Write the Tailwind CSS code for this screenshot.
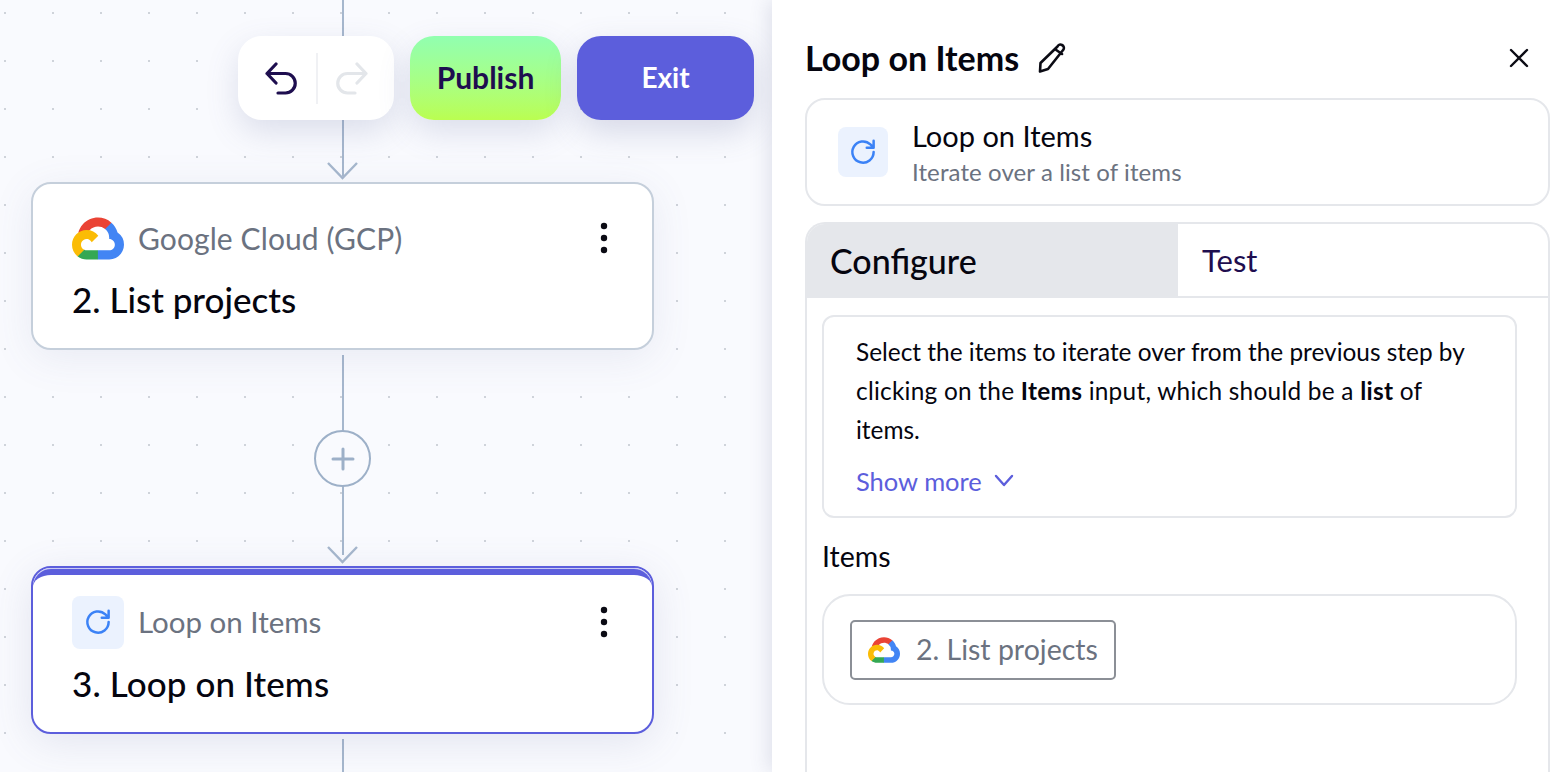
<!DOCTYPE html><html lang="en">
<head>
  <meta charset="UTF-8">
  <meta name="viewport" content="width=device-width, initial-scale=1.0">
  <title>Loop on Items</title>
  <script src="https://cdn.jsdelivr.net/npm/@tailwindcss/browser@4"></script>
</head>
<body class="bg-white font-['Lato',sans-serif] overflow-hidden">
  <div class="flex h-[772px] w-[1563px] overflow-hidden">

    <!-- Canvas -->
    <div class="relative w-[772px] h-full shrink-0 bg-[#f9fafe] bg-[radial-gradient(circle,#cfd3da_1px,transparent_1.4px)] bg-[size:48px_48px] bg-[position:-19px_-11px]">
      <!-- connectors -->
      <div class="absolute left-[342px] top-0 w-[2px] h-[176px] bg-[#a6b7cd]"></div>
      <svg class="absolute left-[326px] top-[160px]" width="33" height="20" viewBox="0 0 33 20" fill="none" stroke="#a6b7cd" stroke-width="2.4"><path d="M2 3 L16.5 18 L31 3"/></svg>
      <div class="absolute left-[342px] top-[355px] w-[2px] h-[200px] bg-[#a6b7cd]"></div>
      <svg class="absolute left-[326px] top-[544px]" width="33" height="20" viewBox="0 0 33 20" fill="none" stroke="#a6b7cd" stroke-width="2.4"><path d="M2 3 L16.5 18 L31 3"/></svg>
      <div class="absolute left-[342px] top-[739px] w-[2px] h-[33px] bg-[#a6b7cd]"></div>
      <div class="absolute left-[314px] top-[430px] w-[57px] h-[57px] rounded-full border-2 border-[#9db0c8] bg-[#f9fafe] flex items-center justify-center">
        <svg width="24" height="24" viewBox="0 0 24 24" fill="none" stroke="#9db0c8" stroke-width="3" stroke-linecap="round"><path d="M12 2 V22 M2 12 H22"/></svg>
      </div>

      <!-- toolbar -->
      <div class="absolute left-[238px] top-[36px] flex gap-4">
        <div class="w-[156px] h-[84px] rounded-3xl bg-white shadow-[0_12px_32px_rgba(90,100,150,0.18)] flex items-center justify-between pl-[27px] pr-[26px]">
          <svg width="34" height="34" viewBox="0 0 34 34" fill="none" stroke="#1e0e4f" stroke-width="3.2" stroke-linecap="round" stroke-linejoin="round"><path d="M11 3 L2 12.5 L11 22 M2 12.5 H20.5 a9.75 9.75 0 0 1 0 19.5 H13"/></svg>
          <div class="w-[2px] h-[51px] bg-[#f0f1f4]"></div>
          <svg width="34" height="34" viewBox="0 0 34 34" fill="none" stroke="#e3e6ea" stroke-width="3.2" stroke-linecap="round" stroke-linejoin="round"><path d="M23 3 L32 12.5 L23 22 M32 12.5 H13.5 a9.75 9.75 0 0 0 0 19.5 H21"/></svg>
        </div>
        <div class="w-[151px] h-[84px] pb-[2px] rounded-3xl bg-gradient-to-b from-[#91ffb0] to-[#bafe50] shadow-[0_12px_32px_rgba(90,100,150,0.18)] flex items-center justify-center text-[30px] font-bold text-[#1e0e4f]">Publish</div>
        <div class="w-[177px] h-[84px] pb-[2px] rounded-3xl bg-[#5c5edc] shadow-[0_12px_32px_rgba(90,100,150,0.22)] flex items-center justify-center text-[28px] font-bold text-white">Exit</div>
      </div>

      <!-- step 2 -->
      <div class="absolute left-[31px] top-[182px] w-[623px] h-[168px] rounded-[20px] border-2 border-[#c5cfdb] bg-white shadow-[0_8px_40px_rgba(90,100,150,0.10)] pl-[39px] pr-[44px] pt-[32px]">
        <div class="flex items-center h-[44px]">
          <svg width="52" height="43" viewBox="0 0 256 206"><path d="M170.252 56.819l22.253-22.253 1.483-9.37C153.437-11.677 88.976-7.496 52.42 33.92 42.267 45.423 34.734 59.764 30.717 74.573l7.97-1.123 44.505-7.34 3.436-3.513c19.797-21.742 53.27-24.667 76.128-6.168l7.496.39z" fill="#EA4335"/><path d="M224.205 73.918c-5.115-18.836-15.616-35.769-30.217-48.722l-31.232 31.232a55.513 55.513 0 0 1 20.379 44.037v5.544c15.351 0 27.797 12.445 27.797 27.796 0 15.352-12.446 27.485-27.797 27.485h-55.671l-5.466 5.934v33.34l5.466 5.231h55.67c39.93.311 72.553-31.494 72.864-71.424a72.303 72.303 0 0 0-31.793-60.453" fill="#4285F4"/><path d="M71.87 205.796h55.593V161.29H71.87a27.275 27.275 0 0 1-11.399-2.498l-7.887 2.42-22.409 22.253-1.952 7.574c12.567 9.489 27.9 14.825 43.647 14.757" fill="#34A853"/><path d="M71.87 61.425C31.94 61.664-.237 94.228.001 134.159a72.301 72.301 0 0 0 28.222 56.88l32.248-32.248c-13.99-6.32-20.208-22.786-13.887-36.776 6.32-13.99 22.786-20.208 36.776-13.888a27.796 27.796 0 0 1 13.887 13.888l32.248-32.248A72.224 72.224 0 0 0 71.87 61.425" fill="#FBBC05"/></svg>
          <span class="ml-[14px] text-[30px] tracking-[0.1px] text-[#6b7280]">Google Cloud (GCP)</span>
          <svg class="ml-auto" width="8" height="32" viewBox="0 0 8 32" fill="#0b0b14"><circle cx="4" cy="4" r="3.2"/><circle cx="4" cy="16" r="3.2"/><circle cx="4" cy="28" r="3.2"/></svg>
        </div>
        <div class="mt-[19px] text-[35px] leading-[40px] font-medium text-[#05050f]">2. List projects</div>
      </div>

      <!-- step 3 -->
      <div class="absolute left-[31px] top-[566px] w-[623px] h-[168px] rounded-[20px] border-2 border-[#5c5edc] bg-white shadow-[0_8px_40px_rgba(90,100,150,0.14)] pl-[39px] pr-[44px] pt-[28px]">
        <div class="absolute left-0 right-0 top-0 h-[40px] rounded-t-[18px] border-t border-[#c9caf5]"></div>
        <div class="absolute left-0 right-0 top-[1px] h-[40px] rounded-t-[18px] border-t-[6px] border-[#5c5edc]"></div>
        <div class="relative flex items-center h-[52px]">
          <div class="w-[52px] h-[53px] rounded-lg bg-[#ebf2fe] flex items-center justify-center">
            <svg width="30" height="30" viewBox="0 0 24 24" fill="none" stroke="#3b82f6" stroke-width="2" stroke-linecap="round" stroke-linejoin="round"><path d="M20.5 12a8.5 8.5 0 1 1-2.6-6.1L20.5 8.5 M20.5 3v5.5H15"/></svg>
          </div>
          <span class="ml-[14px] text-[29.5px] text-[#6b7280]">Loop on Items</span>
          <svg class="ml-auto" width="8" height="32" viewBox="0 0 8 32" fill="#0b0b14"><circle cx="4" cy="4" r="3.2"/><circle cx="4" cy="16" r="3.2"/><circle cx="4" cy="28" r="3.2"/></svg>
        </div>
        <div class="relative mt-[15px] text-[35px] tracking-[0.1px] leading-[40px] font-medium text-[#05050f]">3. Loop on Items</div>
      </div>
    </div>

    <!-- Side panel -->
    <div class="relative flex-1 h-full bg-white shadow-[-4px_0_18px_rgba(70,80,120,0.14)] pl-[33px] pr-[13px] pt-[40px]">
      <div class="flex items-center h-[36px]">
        <span class="text-[34px] leading-[36px] font-bold text-[#05050f]">Loop on Items</span>
        <svg class="ml-[18px]" width="30" height="30" viewBox="0 0 30 30" fill="none" stroke="#0b0b14" stroke-width="2.6" stroke-linejoin="round" stroke-linecap="round"><path d="M20.5 3.5 a3.2 3.2 0 0 1 6 3 L11 26 L3 28.5 L3.5 20 Z M18.5 6.5 L25 11"/></svg>
        <svg class="ml-auto mr-[21px]" width="20" height="20" viewBox="0 0 20 20" fill="none" stroke="#0b0b14" stroke-width="2.4" stroke-linecap="round"><path d="M2 2 L18 18 M18 2 L2 18"/></svg>
      </div>

      <div class="mt-[22px] h-[108px] rounded-[20px] border-2 border-[#e5e7eb] flex items-center pl-[31px]">
        <div class="w-[50px] h-[50px] rounded-lg bg-[#ebf2fe] flex items-center justify-center">
          <svg width="30" height="30" viewBox="0 0 24 24" fill="none" stroke="#3b82f6" stroke-width="2" stroke-linecap="round" stroke-linejoin="round"><path d="M20.5 12a8.5 8.5 0 1 1-2.6-6.1L20.5 8.5 M20.5 3v5.5H15"/></svg>
        </div>
        <div class="ml-[24px] pt-[4px]">
          <div class="text-[29px] leading-[36px] text-[#05050f]">Loop on Items</div>
          <div class="text-[24px] tracking-[0.1px] leading-[36px] text-[#6b7280]">Iterate over a list of items</div>
        </div>
      </div>

      <div class="mt-[16px] h-[600px] rounded-t-[20px] border-2 border-b-0 border-[#e5e7eb] overflow-hidden">
        <div class="flex h-[74px] border-b-2 border-[#e5e7eb]">
          <div class="w-[371px] bg-[#e5e7eb] pl-[23px] flex items-center text-[34px] font-medium text-[#05050f]">Configure</div>
          <div class="pl-[24px] flex items-center text-[31px] text-[#1e0e4f]">Test</div>
        </div>

        <div class="px-[15px] pt-[17px] w-[725px]">
          <div class="rounded-xl border-2 border-[#e5e7eb] pl-[32px] pr-[30px] pt-[15px] pb-[19px]">
            <p class="text-[24.4px] leading-[39px] text-[#05050f]">Select the items to iterate over from the previous step by<br><span class="tracking-[0.25px]">clicking on the <b>Items</b> input, which should be a <b>list</b> of</span><br>items.</p>
            <div class="mt-[16px] flex items-center text-[#5c5edc] text-[25.5px] leading-[32px]">
              Show more
              <svg class="ml-[12px]" width="20" height="14" viewBox="0 0 20 14" fill="none" stroke="#5c5edc" stroke-width="2.4" stroke-linecap="round" stroke-linejoin="round"><path d="M2 2 L10 11 L18 2"/></svg>
            </div>
          </div>
          <div class="mt-[20px] text-[28.5px] leading-[36px] text-[#05050f]">Items</div>
          <div class="mt-[20px] h-[111px] rounded-[28px] border-2 border-[#e5e7eb] flex items-center pl-[26px]">
            <div class="h-[60px] w-[266px] rounded-[5px] border-2 border-[#8b8f96] flex items-center pl-[16px]">
              <svg width="32" height="26" viewBox="0 0 256 206"><path d="M170.252 56.819l22.253-22.253 1.483-9.37C153.437-11.677 88.976-7.496 52.42 33.92 42.267 45.423 34.734 59.764 30.717 74.573l7.97-1.123 44.505-7.34 3.436-3.513c19.797-21.742 53.27-24.667 76.128-6.168l7.496.39z" fill="#EA4335"/><path d="M224.205 73.918c-5.115-18.836-15.616-35.769-30.217-48.722l-31.232 31.232a55.513 55.513 0 0 1 20.379 44.037v5.544c15.351 0 27.797 12.445 27.797 27.796 0 15.352-12.446 27.485-27.797 27.485h-55.671l-5.466 5.934v33.34l5.466 5.231h55.67c39.93.311 72.553-31.494 72.864-71.424a72.303 72.303 0 0 0-31.793-60.453" fill="#4285F4"/><path d="M71.87 205.796h55.593V161.29H71.87a27.275 27.275 0 0 1-11.399-2.498l-7.887 2.42-22.409 22.253-1.952 7.574c12.567 9.489 27.9 14.825 43.647 14.757" fill="#34A853"/><path d="M71.87 61.425C31.94 61.664-.237 94.228.001 134.159a72.301 72.301 0 0 0 28.222 56.88l32.248-32.248c-13.99-6.32-20.208-22.786-13.887-36.776 6.32-13.99 22.786-20.208 36.776-13.888a27.796 27.796 0 0 1 13.887 13.888l32.248-32.248A72.224 72.224 0 0 0 71.87 61.425" fill="#FBBC05"/></svg>
              <span class="ml-[16px] text-[28.5px] text-[#6b7280]">2. List projects</span>
            </div>
          </div>
        </div>
      </div>
    </div>
  </div>
</body>
</html>
